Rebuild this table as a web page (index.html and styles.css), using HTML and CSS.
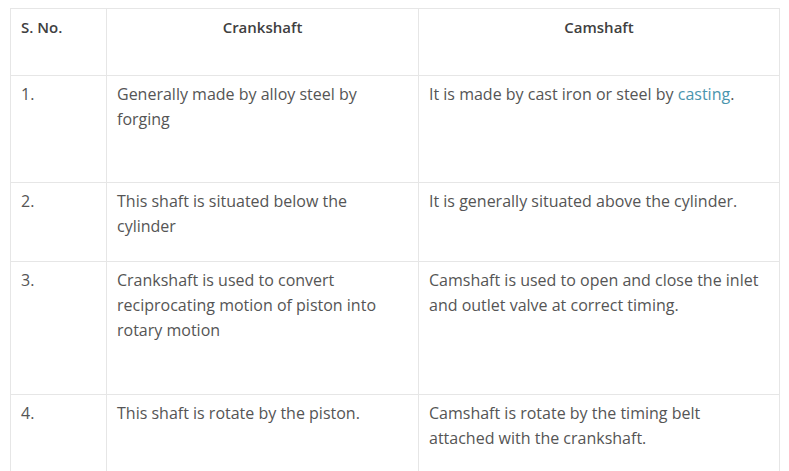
FILE: index.html
```html
<!DOCTYPE html>
<html>
<head>
<meta charset="utf-8">
<link rel="stylesheet" href="styles.css">
</head>
<body>
<table class="cmp">
  <colgroup>
    <col class="c1"><col class="c2"><col class="c3">
  </colgroup>
  <tr class="r-head">
    <th class="left">S. No.</th>
    <th>Crankshaft</th>
    <th>Camshaft</th>
  </tr>
  <tr class="r1">
    <td>1.</td>
    <td>Generally made by alloy steel by forging</td>
    <td>It is made by cast iron or steel by <a href="#">casting</a>.</td>
  </tr>
  <tr class="r2">
    <td>2.</td>
    <td>This shaft is situated below the cylinder</td>
    <td>It is generally situated above the cylinder.</td>
  </tr>
  <tr class="r3">
    <td>3.</td>
    <td>Crankshaft is used to convert reciprocating motion of piston into rotary motion</td>
    <td>Camshaft is used to open and close the inlet and outlet valve at correct timing.</td>
  </tr>
  <tr class="r4">
    <td>4.</td>
    <td>This shaft is rotate by the piston.</td>
    <td>Camshaft is rotate by the timing belt attached with the crankshaft.</td>
  </tr>
</table>
</body>
</html>
```

FILE: styles.css
```css
html, body {
  margin: 0;
  padding: 0;
  background: #fff;
}
body {
  padding: 8px 0 0 10px;
  font-family: "Open Sans", "DejaVu Sans", sans-serif;
  color: #555;
}
.cmp {
  border-collapse: collapse;
  table-layout: fixed;
  width: 770px;
}
.c1 { width: 96px; }
.c2 { width: 312px; }
.c3 { width: 361px; }
.cmp th, .cmp td {
  border: 1px solid #e6e6e6;
  vertical-align: top;
  text-align: left;
  padding: 6px 10px 0 10px;
  font-size: 16px;
  line-height: 25px;
}
.cmp th {
  font-size: 15px;
  font-weight: 600;
  color: #404040;
  text-align: center;
  padding-top: 6px;
}
.cmp th.left { text-align: left; }
.cmp a {
  color: #4a95ae;
  text-decoration: none;
}
.r-head { height: 67px; }
.r1 { height: 107px; }
.r2 { height: 79px; }
.r3 { height: 133px; }
.r4 { height: 100px; }
```
